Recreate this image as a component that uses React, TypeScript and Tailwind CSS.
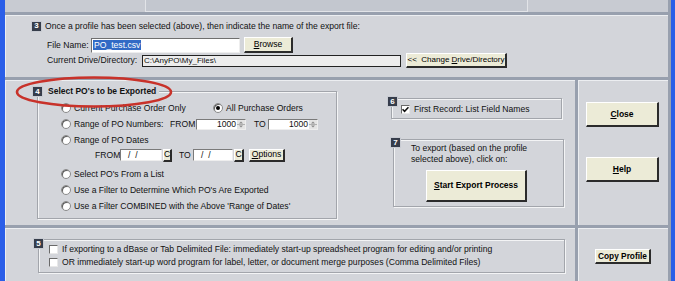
import type { ReactNode } from "react";

function Badge({ n }: { n: string }) {
  return (
    <span className="flex h-[11px] w-[11px] shrink-0 items-center justify-center border border-[#c9ccd3] bg-[#363d4b] text-[8px] font-bold leading-none text-white">
      {n}
    </span>
  );
}

function Btn({ children, className = "" }: { children: ReactNode; className?: string }) {
  return (
    <div
      className={
        "flex shrink-0 items-center justify-center whitespace-nowrap border-t border-l border-r-2 border-b-2 border-t-white border-l-white border-r-[#2b2b2b] border-b-[#2b2b2b] bg-[#ecebd7] leading-none text-black " +
        className
      }
    >
      {children}
    </div>
  );
}

function Radio({ checked = false }: { checked?: boolean }) {
  return (
    <span className="flex h-[10px] w-[10px] shrink-0 items-center justify-center rounded-full border border-[#8a8a8a] bg-white shadow-[inset_1px_1px_0_#5a5a5a]">
      {checked && <span className="h-[4px] w-[4px] rounded-full bg-black" />}
    </span>
  );
}

function Check({ checked = false }: { checked?: boolean }) {
  return (
    <span className="flex h-[9px] w-[9px] shrink-0 items-center justify-center border border-t-[#6a6a6a] border-l-[#6a6a6a] border-r-[#e8e8e8] border-b-[#e8e8e8] bg-white">
      {checked && (
        <svg width="7" height="7" viewBox="0 0 7 7">
          <path d="M0.5 3.2 L2.6 5.4 L6.5 1.2" fill="none" stroke="#111" strokeWidth="1.6" />
        </svg>
      )}
    </span>
  );
}

function Spin({ value }: { value: string }) {
  return (
    <div className="flex h-[11px] w-[50px] items-center border border-t-[#7a7a7a] border-l-[#7a7a7a] border-r-[#eee] border-b-[#eee] bg-white">
      <span className="flex-1 pr-[1px] text-right">{value}</span>
      <svg width="8" height="9" viewBox="0 0 8 9" className="shrink-0">
        <rect x="0" y="0" width="8" height="9" fill="#e4e4e4" />
        <path d="M2 3.5 L4 1.5 L6 3.5 Z M2 5.5 L4 7.5 L6 5.5 Z" fill="#8a8a8a" />
        <line x1="0" y1="4.5" x2="8" y2="4.5" stroke="#b0b0b0" strokeWidth="1" />
      </svg>
    </div>
  );
}

function DateBox({ w }: { w: string }) {
  return (
    <div className={"flex h-[12px] items-center border border-t-[#7a7a7a] border-l-[#7a7a7a] border-r-[#eee] border-b-[#eee] bg-white pl-[7px] " + w}>
      /&nbsp;&nbsp;/
    </div>
  );
}

function Row({ children, className = "" }: { children: ReactNode; className?: string }) {
  return <div className={"flex h-[16px] items-center whitespace-nowrap " + className}>{children}</div>;
}

const group =
  "relative shrink-0 border border-[#a2a5ab] shadow-[inset_1px_1px_0_#f3f4f5,1px_1px_0_#f3f4f5]";
const panel = "border-t border-l border-[#eceef1] bg-[#d3d5da]";

export default function App() {
  return (
    <div className="relative flex h-[281px] w-[675px] overflow-hidden bg-[#2a5ee8] pl-[5px] pr-[4px] font-['Liberation_Sans',Arial,sans-serif] text-[8.6px] leading-none text-[#111]">
      <div className="flex flex-1 flex-col gap-[3px] bg-[#98a0ae] pr-[3px]">
        {/* tail of section 2 */}
        <div className="flex h-[12px] shrink-0 bg-[#c8cbd2]">
          <div className="ml-[140px] w-[383px] border-r border-b border-l border-[#e2e4e8] bg-[#c3c7cf]" />
        </div>

        {/* section 3 */}
        <div className={"h-[62px] shrink-0 pl-[25px] pt-[4px] " + panel}>
          <div className="flex h-[12px] items-center gap-[3px]">
            <Badge n="3" />
            <span>Once a profile has been selected (above), then indicate the name of the export file:</span>
          </div>
          <div className="mt-[5px] flex h-[16px] items-center pl-[16px]">
            <span className="w-[44px] shrink-0">File Name:</span>
            <div className="flex h-[15px] w-[149px] items-center border border-t-[#6f6f6f] border-l-[#6f6f6f] border-r-[#eee] border-b-[#eee] bg-white pl-[1px]">
              <span className="bg-[#316ac5] px-[1px] py-[1px] text-white">PO_test.csv</span>
            </div>
            <Btn className="ml-[4px] h-[16px] w-[49px]">
              <span><u>B</u>rowse</span>
            </Btn>
          </div>
          <div className="flex h-[15px] items-center pl-[16px]">
            <span className="w-[95px] shrink-0">Current Drive/Directory:</span>
            <div className="flex h-[12px] w-[259px] items-center border border-[#222] bg-[#ededed] pl-[1px] text-[8px]">
              C:\AnyPO\My_Files\
            </div>
            <Btn className="ml-[5px] h-[15px] w-[101px] text-[8px]">
              <span>&lt;&lt;&nbsp; Change <u>D</u>rive/Directory</span>
            </Btn>
          </div>
        </div>

        {/* section 4, 6, 7 */}
        <div className="flex h-[145px] shrink-0 gap-[3px]">
          <div className={"flex w-[570px] shrink-0 items-start " + panel}>
            <div className={"ml-[31px] mt-[10px] h-[128px] w-[300px] pl-[23px] pt-[8px] " + group}>
              <div className="absolute -left-[6px] -top-[6px] flex h-[11px] items-center gap-[5px] bg-[#d3d5da] pr-[3px]">
                <Badge n="4" />
                <span className="text-[8.5px] font-bold">Select PO's to be Exported</span>
              </div>
              <Row>
                <span className="flex w-[152px] items-center gap-[3px]">
                  <Radio />
                  Current Purchase Order Only
                </span>
                <span className="flex items-center gap-[3px]">
                  <Radio checked />
                  All Purchase Orders
                </span>
              </Row>
              <Row>
                <span className="flex w-[109px] items-center gap-[3px]">
                  <Radio />
                  Range of PO Numbers:
                </span>
                <span className="w-[26px]">FROM</span>
                <Spin value="1000" />
                <span className="ml-[8px] w-[14px]">TO</span>
                <Spin value="1000" />
              </Row>
              <Row className="gap-[3px]">
                <Radio />
                Range of PO Dates
              </Row>
              <div className="flex h-[14px] items-center pl-[34px]">
                <span className="w-[25px]">FROM</span>
                <DateBox w="w-[42px]" />
                <Btn className="ml-[1px] h-[13px] w-[9px] text-[8.5px]">C</Btn>
                <span className="ml-[7px] w-[14px]">TO</span>
                <DateBox w="w-[40px]" />
                <Btn className="ml-[1px] h-[13px] w-[10px] text-[8.5px]">C</Btn>
                <Btn className="ml-[5px] h-[13px] w-[36px]">
                  <span><u>O</u>ptions</span>
                </Btn>
              </div>
              <Row className="mt-[4px] gap-[3px]">
                <Radio />
                Select PO's From a List
              </Row>
              <Row className="gap-[3px]">
                <Radio />
                Use a Filter to Determine Which PO's Are Exported
              </Row>
              <Row className="gap-[3px]">
                <Radio />
                Use a Filter COMBINED with the Above 'Range of Dates'
              </Row>
            </div>

            <div className="ml-[54px] flex flex-col">
              <div className={"mt-[17px] flex h-[21px] w-[171px] items-center gap-[4px] pl-[9px] pt-[1px] " + group}>
                <span className="absolute -left-[5px] -top-[3px]">
                  <Badge n="6" />
                </span>
                <Check checked />
                First Record: List Field Names
              </div>
              <div className={"ml-[2px] mt-[20px] h-[68px] w-[171px] pl-[17px] pt-[3px] " + group}>
                <span className="absolute -left-[4px] -top-[3px]">
                  <Badge n="7" />
                </span>
                <div className="leading-[11px]">
                  To export (based on the profile
                  <br />
                  selected above), click on:
                </div>
                <Btn className="ml-[15px] mt-[5px] h-[32px] w-[101px] text-[8.5px] font-bold">
                  <span><u>S</u>tart Export Process</span>
                </Btn>
              </div>
            </div>
          </div>

          <div className={"flex flex-1 flex-col items-start pl-[7px] pt-[21px] " + panel}>
            <Btn className="h-[25px] w-[73px] text-[8.5px] font-bold">
              <span><u>C</u>lose</span>
            </Btn>
            <Btn className="mt-[30px] h-[25px] w-[73px] text-[8.5px] font-bold">
              <span><u>H</u>elp</span>
            </Btn>
          </div>
        </div>

        {/* section 5 */}
        <div className="flex flex-1 gap-[3px]">
          <div className={"flex w-[570px] shrink-0 items-start " + panel}>
            <div className={"ml-[32px] mt-[10px] h-[34px] w-[527px] pl-[10px] pt-[3px] " + group}>
              <span className="absolute -left-[6px] -top-[2px]">
                <Badge n="5" />
              </span>
              <div className="flex h-[13px] items-center gap-[4px]">
                <Check />
                If exporting to a dBase or Tab Delimited File: immediately start-up spreadsheet program for editing and/or printing
              </div>
              <div className="flex h-[13px] items-center gap-[4px]">
                <Check />
                OR immediately start-up word program for label, letter, or document merge purposes (Comma Delimited Files)
              </div>
            </div>
          </div>
          <div className={"flex flex-1 items-start pl-[16px] pt-[20px] " + panel}>
            <Btn className="h-[15px] w-[56px] text-[8.3px] font-bold">Copy Profile</Btn>
          </div>
        </div>
      </div>

      {/* red hand-drawn highlight */}
      <svg className="pointer-events-none absolute left-[14px] top-[74px]" width="162" height="36" viewBox="0 0 162 36">
        <ellipse cx="80" cy="18" rx="77" ry="14.5" fill="none" stroke="#c8322a" strokeWidth="2.6" />
      </svg>
    </div>
  );
}
